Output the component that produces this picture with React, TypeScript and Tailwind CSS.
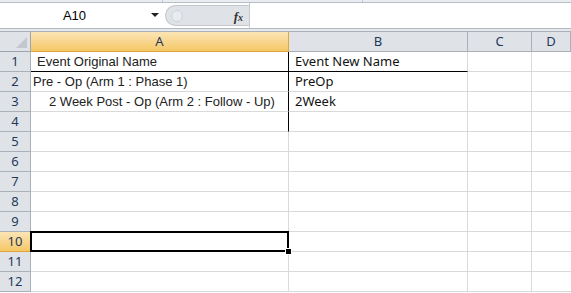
import React from 'react'

const ROWS: { a?: string; b?: string; indent?: boolean }[] = [
  { a: 'Event Original Name', b: 'Event New Name' },
  { a: 'Pre - Op (Arm 1 : Phase 1)', b: 'PreOp' },
  { a: '2 Week Post - Op (Arm 2 : Follow - Up)', b: '2Week', indent: true },
  {},
  {},
  {},
  {},
  {},
  {},
  {},
  {},
  {},
]

const COLS = ['A', 'B', 'C', 'D']

export default function App() {
  return (
    <div className="w-[571px] h-[293px] overflow-hidden bg-white font-['Liberation_Sans',Arial,sans-serif]">
      {/* ribbon edge */}
      <div className="h-[3px] flex bg-[#e9edf2] border-b border-[#b8bec6]">
        <div className="w-[163px] border-r border-[#c5cad1]" />
        <div className="w-[200px] border-r border-[#c5cad1]" />
      </div>

      {/* formula bar */}
      <div className="h-[26px] flex items-stretch bg-white border-b border-[#b3b9c1]">
        <div className="w-[165px] flex items-center relative">
          <span className="flex-1 text-center text-[13px] text-black pr-[16px]">A10</span>
          <span className="absolute left-[151px] top-[10px] w-0 h-0 border-l-[4px] border-r-[4px] border-t-[4px] border-l-transparent border-r-transparent border-t-[#222]" />
        </div>
        <div className="w-[84px] my-[2px] flex items-center bg-[#dfe3e8] rounded-l-[12px] border border-r-0 border-[#c2c7ce] relative">
          <span className="ml-[5px] w-[12px] h-[12px] rounded-full bg-[#e8ebef] border border-[#cfd4da]" />
          <span className="absolute right-[6px] top-[1px] text-[13px] italic font-bold text-[#333] font-['Liberation_Serif',serif]">
            f<span className="text-[10px]">x</span>
          </span>
        </div>
        <div className="w-px bg-[#c5cad1]" />
        <div className="flex-1" />
      </div>
      <div className="h-[3px] bg-[#e6e9ed] border-b border-[#a9b0b8]" />

      {/* grid */}
      <div className="grid grid-cols-[31px_258px_179px_64px_1fr] font-['Noto_Sans',sans-serif]">
        {/* header row */}
        <div className="h-[20px] bg-[#dfe3e8] border-r border-b border-[#9da5ae] relative">
          <svg className="absolute right-[3px] bottom-[3px]" width="11" height="11">
            <polygon points="11,0 11,11 0,11" fill="#c3c8ce" />
          </svg>
        </div>
        {COLS.map((c) => (
          <div
            key={c}
            className={
              c === 'A'
                ? 'h-[20px] flex items-center justify-center text-[13px] text-[#1e395b] bg-gradient-to-b from-[#fbe4b4] to-[#f5c865] border-r border-b border-[#e0a53b]'
                : 'h-[20px] flex items-center justify-center text-[13px] text-[#1e395b] bg-[#dfe3e8] border-r border-b border-[#a9b0b8]'
            }
          >
            {c}
          </div>
        ))}

        {ROWS.map((r, i) => {
          const n = i + 1
          const sel = n === 10
          return (
            <React.Fragment key={n}>
              <div
                className={
                  sel
                    ? 'h-[20px] flex items-center justify-center text-[13px] text-[#1e395b] bg-gradient-to-b from-[#fbe4b4] to-[#f5c865] border-r border-b border-[#e0a53b]'
                    : 'h-[20px] flex items-center justify-center text-[13px] text-[#1e395b] bg-[#dfe3e8] border-r border-b border-[#a9b0b8]'
                }
              >
                {n}
              </div>
              <div
                className={
                  'h-[20px] relative flex items-center text-[13px] text-[#222] font-["Liberation_Sans",Arial,sans-serif] whitespace-nowrap border-r border-b ' +
                  (n === 1 ? 'border-b-black ' : 'border-b-[#d9d9d9] ') +
                  (n >= 1 && n <= 4 ? 'border-r-black' : 'border-r-[#d9d9d9]') +
                  (sel ? ' z-10' : '')
                }
              >
                <span className={n === 1 ? 'pl-[6px]' : r.indent ? 'pl-[18px]' : 'pl-[2px]'}>{r.a}</span>
                {sel && (
                  <>
                    <div className="absolute left-[-1px] top-[-1px] right-[-1px] bottom-[-1px] border-2 border-black" />
                    <div className="absolute right-[-4px] bottom-[-4px] w-[7px] h-[7px] bg-black border border-white" />
                  </>
                )}
              </div>
              <div
                className={
                  'h-[20px] flex items-center text-[13px] text-[#111] pl-[6px] border-r border-b border-r-[#d9d9d9] ' +
                  (n === 1 ? 'border-b-black' : 'border-b-[#d9d9d9]')
                }
              >
                {r.b}
              </div>
              <div className="h-[20px] border-r border-b border-[#d9d9d9]" />
              <div className="h-[20px] border-b border-[#d9d9d9]" />
            </React.Fragment>
          )
        })}
      </div>
    </div>
  )
}
